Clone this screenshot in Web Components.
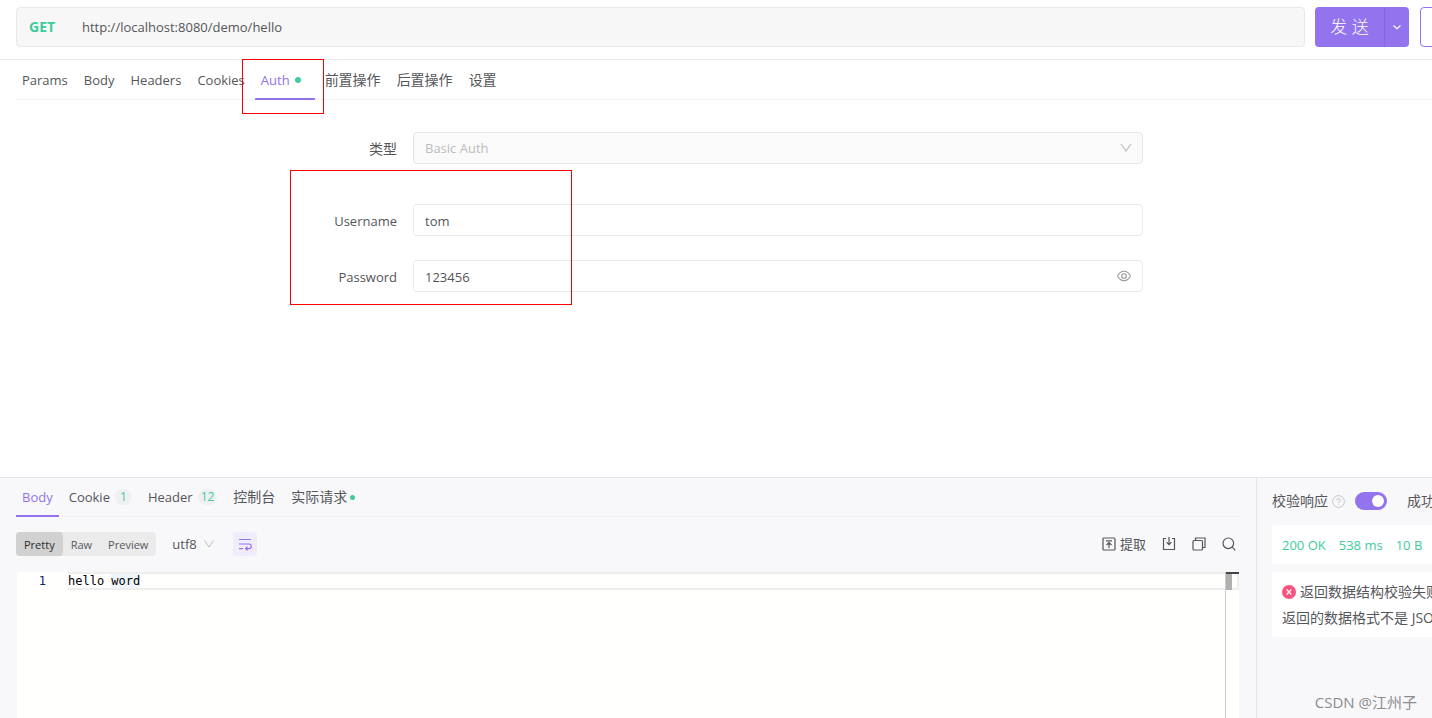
<!DOCTYPE html>
<html lang="zh-CN">
<head>
<meta charset="utf-8">
<title>API 请求调试</title>
<style>
  html, body { margin: 0; height: 100%; }
  body {
    --purple: #9373ee;
    --green: #3dcc9a;
    --line: #e9e9ee;
    --text: #555659;
    --pane: #f8f8fb;
    --mark: #f00;
    color: var(--text);
    background: #fff;
    font: 13px/20px "Open Sans", "Noto Sans CJK SC", sans-serif;
    overflow: hidden;
  }
</style>
</head>
<body>
<api-workbench></api-workbench>

<script>
const define = (name, html, setup) => {
  const template = document.createElement('template');
  template.innerHTML = `<style>*{box-sizing:border-box}button,input,select{font:inherit;color:inherit;margin:0}svg{display:block;fill:none;stroke:currentColor;flex:none}.cjk{font-size:14px}</style>` + html;
  customElements.define(name, class extends HTMLElement {
    constructor() {
      super();
      this.attachShadow({ mode: 'open' }).append(template.content.cloneNode(true));
    }
    connectedCallback() { if (setup) setup(this.shadowRoot, this); }
  });
};

define('url-bar', `
<style>
  :host { display: flex; padding: 7px 0 12px 16px; border-bottom: 1px solid var(--line); }
  .address { flex: 1; min-width: 0; height: 40px; display: flex; align-items: center; padding: 0 12px; background: #f7f7f8; border: 1px solid #e8e8ee; border-radius: 4px; margin-right: 10px; }
  .method { width: 53px; flex: none; color: var(--green); font-size: 14px; font-weight: 700; background: none; border: 0; padding: 0; text-align: left; }
  input { flex: 1; min-width: 0; border: 0; background: none; padding: 0; outline: 0; }
  .send, .more { background: var(--purple); color: #fff; border: 0; height: 40px; padding: 0; }
  .send { width: 69px; font-size: 17px; font-weight: 300; border-radius: 4px 0 0 4px; }
  .more { width: 25px; border-left: 1px solid #8467d8; border-radius: 0 4px 4px 0; display: flex; align-items: center; justify-content: center; }
  .save { width: 80px; margin: 0 -68px 0 11px; background: #fff; border: 1px solid var(--purple); border-radius: 4px; }
</style>
<div class="address"><button class="method">GET</button><input aria-label="URL" value="http://localhost:8080/demo/hello"></div>
<button class="send">发 送</button>
<button class="more" aria-label="更多"><svg width="10" height="10" viewBox="0 0 10 10" stroke-width="1.2"><path d="M1.500 3.500 5 6.700 8.500 3.500"/></svg></button>
<button class="save" aria-label="保存"></button>
`);

define('tab-item', `
<style>
  :host { display: block; position: relative; flex: none; }
  button { height: 100%; display: flex; align-items: center; padding: 0 6px; border: 0; background: none; white-space: nowrap; }
  :host([cjk]) button { font-size: 14px; }
  :host([active]) button { color: var(--purple); font-weight: 500; }
  :host([active])::after { content: ""; position: absolute; left: 0; right: 0; bottom: -1px; height: 2px; background: var(--purple); }
</style>
<button role="tab"><slot></slot></button>
`, (root, host) => root.querySelector('button').setAttribute('aria-selected', host.hasAttribute('active')));

define('status-dot', `
<style>:host { display: block; width: var(--dot, 6px); height: var(--dot, 6px); border-radius: 50%; background: var(--green); }</style>
`);

define('count-badge', `
<style>:host { display: block; box-sizing: border-box; min-width: 17px; margin-left: 5px; padding: 0 3px; height: 16px; border-radius: 8px; background: #f0f0f3; color: var(--green); font-size: 12px; line-height: 16px; text-align: center; }</style>
<slot></slot>
`);

define('form-row', `
<style>
  :host { display: grid; grid-template-columns: 124px 1fr; align-items: center; }
  .name { text-align: right; padding: 2px 16px 0 0; }
  .field { position: relative; display: flex; align-items: center; }
  input, select { width: 100%; height: 32px; border: 1px solid #ebebed; border-radius: 4px; padding: 2px 12px 0 11px; background: #fff; outline: 0; appearance: none; }
  select { background: #fafafa; border-color: #e6e6e8; padding-top: 0; color: #bcbcbe; opacity: 1; }
  .icon { position: absolute; right: 11px; border: 0; background: none; padding: 0; color: #bcbcbe; }
  button.icon { color: #97989b; }
</style>
<label class="name" for="control"></label>
<div class="field"></div>
`, (root, host) => {
  const label = root.querySelector('label');
  const field = root.querySelector('.field');
  const type = host.getAttribute('type');
  label.textContent = host.getAttribute('label');
  if (type === 'select') {
    label.classList.add('cjk');
    field.innerHTML = `<select id="control" disabled><option>${host.getAttribute('value')}</option></select>
      <svg class="icon" width="12" height="12" viewBox="0 0 12 12" stroke-width="1.100"><path d="M1 2 6 9 11 2"/></svg>`;
  } else {
    field.innerHTML = `<input id="control" value="${host.getAttribute('value')}">` + (type === 'password' ?
      `<button class="icon" aria-label="显示密码"><svg width="15" height="14" viewBox="0 0 15 14" stroke-width="1.100"><path d="M.6 7C2.200 3.800 4.400 2.300 7 2.300S11.800 3.800 13.400 7C11.800 10.200 9.600 11.700 7 11.700S2.200 10.200.6 7Z"/><circle cx="7" cy="7" r="2.300"/></svg></button>` : '');
  }
});

define('auth-form', `
<style>
  :host { display: flex; flex-direction: column; gap: 40px; max-width: 854px; margin: 32px auto 0; }
  .credentials { position: relative; display: flex; flex-direction: column; gap: 24px; }
  .mark { position: absolute; left: 1px; top: -34px; width: 282px; bottom: -13px; border: 1px solid var(--mark); pointer-events: none; }
</style>
<form-row type="select" label="类型" value="Basic Auth"></form-row>
<div class="credentials">
  <form-row label="Username" value="tom"></form-row>
  <form-row type="password" label="Password" value="123456"></form-row>
  <div class="mark"></div>
</div>
`);

define('request-panel', `
<style>
  :host { display: block; min-width: 0; }
  nav { display: flex; gap: 4px; height: 40px; margin-left: 16px; border-bottom: 1px solid #f3f3f6; }
  .auth { position: relative; display: flex; }
  status-dot { margin: 0 8px 0 5px; }
  .mark { position: absolute; left: -13px; top: -1px; width: 82px; height: 55px; border: 1px solid var(--mark); pointer-events: none; }
</style>
<url-bar></url-bar>
<nav role="tablist">
  <tab-item>Params</tab-item><tab-item>Body</tab-item><tab-item>Headers</tab-item><tab-item>Cookies</tab-item>
  <div class="auth"><tab-item active>Auth<status-dot></status-dot></tab-item><div class="mark"></div></div>
  <tab-item cjk>前置操作</tab-item><tab-item cjk>后置操作</tab-item><tab-item cjk>设置</tab-item>
</nav>
<auth-form></auth-form>
`);

define('body-toolbar', `
<style>
  :host { display: flex; align-items: center; height: 24px; margin: 15px 0 16px; }
  button { border: 0; background: none; padding: 0; display: flex; align-items: center; }
  .modes { display: flex; background: #ebebec; border-radius: 4px; height: 24px; font-size: 11px; }
  .modes button { padding: 2px 8px 0; border-radius: 4px; }
  .modes .on { background: #d1d1d2; color: #2c2c2e; }
  .encoding { position: relative; display: flex; align-items: center; margin-left: 16px; width: 42px; }
  select { appearance: none; border: 0; background: none; padding: 0; width: 100%; outline: 0; }
  .encoding svg { position: absolute; right: 0; pointer-events: none; color: #bcbcbe; }
  .wrap { width: 24px; height: 24px; margin-left: 19px; background: #f0ecfa; border-radius: 4px; color: var(--purple); justify-content: center; }
  .tools { margin-left: auto; display: flex; gap: 16px; padding-right: 3px; }
  .tools .extract { gap: 4px; }
</style>
<div class="modes"><button class="on">Pretty</button><button>Raw</button><button>Preview</button></div>
<div class="encoding"><select aria-label="编码"><option>utf8</option></select><svg width="10" height="10" viewBox="0 0 10 10"><path d="M.5 1.500 5 8 9.500 1.500"/></svg></div>
<button class="wrap" aria-label="自动换行"><svg width="14" height="14" viewBox="0 0 14 14" stroke-width="1.200"><path d="M1 2.500H13M1 7H11A2.300 2.300 0 0 1 11 11.600H8M1 11.600H5M9.500 9.700 7.600 11.600 9.500 13.500"/></svg></button>
<div class="tools">
  <button class="extract"><svg width="14" height="14" viewBox="0 0 14 14" stroke-width="1.200"><rect x="1" y="1" width="12" height="12" rx="1"/><path d="M4 3.800H10M7 11V5.800M4.500 8 7 5.500 9.500 8"/></svg>提取</button>
  <button aria-label="保存"><svg width="14" height="14" viewBox="0 0 14 14" stroke-width="1.200"><path d="M4 1.500H1.500V12.500H12.500V1.500H10M7 0V7.500M4.500 5.200 7 7.700 9.500 5.200"/></svg></button>
  <button aria-label="复制"><svg width="14" height="14" viewBox="0 0 14 14" stroke-width="1.200"><rect x="1" y="3.500" width="9.500" height="9.500" rx="1"/><path d="M3.500 3.500V1H13V10.500H10.500"/></svg></button>
  <button aria-label="搜索"><svg width="14" height="14" viewBox="0 0 14 14" stroke-width="1.200"><circle cx="6.300" cy="6.300" r="5.300"/><path d="M10.200 10.200 13.300 13.300"/></svg></button>
</div>
`);

define('code-view', `
<style>
  :host { display: flex; flex: 1; min-height: 146px; margin-left: 1px; background: #fffffe; font: 12px/18px "DejaVu Sans Mono", monospace; color: #000; }
  .gutter { width: 51px; padding-right: 22px; text-align: right; color: #0b216f; flex: none; }
  pre { margin: 0; flex: 1; font: inherit; }
  .row { height: 18px; line-height: 18px; border: solid #eee; border-width: 2px 0; display: flex; align-items: center; white-space: pre; }
  .hit { background: #eef5fd; line-height: 14px; }
  .ruler { width: 14px; flex: none; border-left: 1px solid #ccc; }
  .caret { height: 2px; background: #424242; }
  .thumb { height: 16px; border: solid #eee; border-width: 0 2px 2px 0; }
  .thumb::before { content: ""; display: block; width: 6px; height: 16px; background: #b0b0b0; }
</style>
<div class="gutter">1</div>
<pre><div class="row">hello <span class="hit">word</span></div></pre>
<div class="ruler"><div class="caret"></div><div class="thumb"></div></div>
`);

define('response-body', `
<style>
  :host { display: flex; flex-direction: column; flex: 1; min-width: 0; padding: 0 17px 0 16px; }
  nav { display: flex; gap: 4px; height: 39px; border-bottom: 1px solid #f1f1f4; }
  status-dot { --dot: 5px; margin-left: 3px; }
</style>
<nav role="tablist">
  <tab-item active>Body</tab-item>
  <tab-item>Cookie<count-badge>1</count-badge></tab-item>
  <tab-item>Header<count-badge>12</count-badge></tab-item>
  <tab-item cjk>控制台</tab-item>
  <tab-item cjk>实际请求<status-dot></status-dot></tab-item>
</nav>
<body-toolbar></body-toolbar>
<code-view></code-view>
`);

define('info-card', `
<style>:host { display: block; width: 320px; background: #fff; border-radius: 4px; padding: 7px 10px 6px; line-height: 26px; white-space: nowrap; }</style>
<slot></slot>
`);

define('check-panel', `
<style>
  :host { display: flex; flex-direction: column; gap: 8px; width: 176px; flex: none; padding: 11px 0 0 15px; border-left: 1px solid #e4e6ec; overflow: hidden; }
  header { display: flex; align-items: center; height: 24px; margin-bottom: 4px; white-space: nowrap; }
  .help { margin: 0 10px 0 4px; color: #c4c4c7; }
  input { appearance: none; width: 32px; height: 18px; border-radius: 9px; background: var(--purple); margin-right: 20px; flex: none; padding: 3px; }
  input::before { content: ""; display: block; width: 12px; height: 12px; border-radius: 50%; background: #fff; margin-left: auto; }
  .stats { display: flex; gap: 13px; color: var(--green); }
  .fail { display: flex; align-items: center; gap: 4px; }
</style>
<header class="cjk"><label for="check">校验响应</label>
  <svg class="help" width="13" height="13" viewBox="0 0 13 13"><circle cx="6.500" cy="6.500" r="5.900"/><path d="M4.800 5.300A1.700 1.600 0 1 1 7 6.700Q6.500 6.900 6.500 7.700M6.500 8.800V9.800"/></svg>
  <input type="checkbox" role="switch" id="check" checked><span>成功</span></header>
<info-card><div class="stats"><span>200 OK</span><span>538 ms</span><span>10 B</span></div></info-card>
<info-card><div class="fail cjk"><svg width="14" height="14" viewBox="0 0 14 14"><circle cx="7" cy="7" r="7" fill="#f9527e" stroke="none"/><path stroke="#fff" stroke-width="1.200" d="M4.700 4.500 9.300 9.500M9.300 4.500 4.700 9.500"/></svg><span>返回数据结构校验失败</span></div><div class="cjk">返回的数据格式不是 JSON</div></info-card>
`);

define('api-workbench', `
<style>
  :host { position: relative; display: grid; grid-template-rows: 1fr auto; min-height: 100vh; overflow: hidden; }
  section { display: flex; background: var(--pane); border-top: 1px solid #e4e6ec; min-width: 0; }
  .watermark { position: absolute; right: 15px; bottom: 6px; color: #8c8c8e; font-size: 15px; }
</style>
<request-panel></request-panel>
<section><response-body></response-body><check-panel></check-panel></section>
<div class="watermark">CSDN @江州子</div>
`);
</script>
</body>
</html>
